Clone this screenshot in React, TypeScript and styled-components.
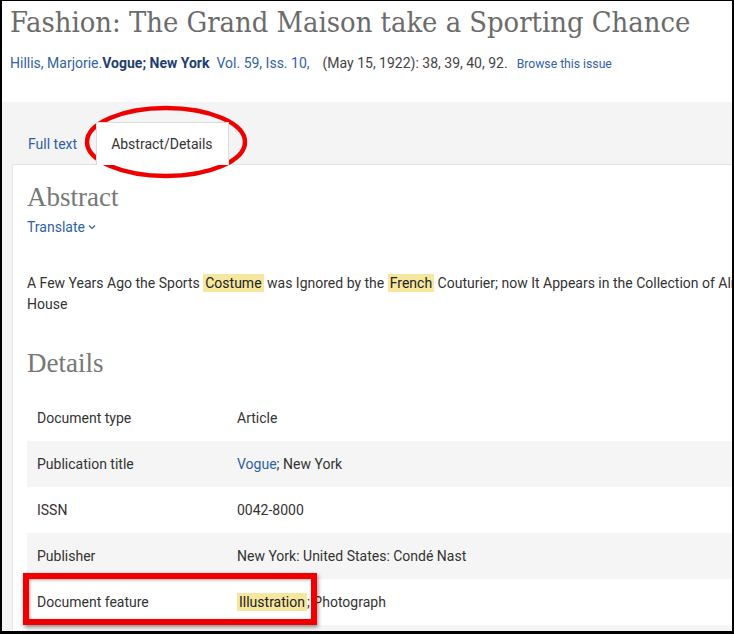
import React from "react";
import styled, { createGlobalStyle } from "styled-components";

const Global = createGlobalStyle`
  html, body { margin: 0; padding: 0; background: #000; }
  body { font-family: Roboto, "Liberation Sans", sans-serif; }
  * { box-sizing: border-box; }
`;

const Frame = styled.div`
  width: 734px;
  height: 634px;
  background: #000;
  padding: 1px 2px 3px 2px;
`;

const Screen = styled.div`
  position: relative;
  width: 100%;
  height: 100%;
  background: #fff;
  overflow: hidden;
`;

const Header = styled.header`
  padding: 3px 8px 0 8px;
  height: 101px;
`;

const Title = styled.h1`
  margin: 0;
  font-family: "DejaVu Serif", "Liberation Serif", serif;
  font-stretch: condensed;
  font-weight: 400;
  font-size: 28.8px;
  line-height: 36px;
  color: #6b6b6b;
  white-space: nowrap;
`;

const Meta = styled.div`
  margin-top: 14px;
  font-size: 14px;
  line-height: 18px;
  color: #444;
  white-space: nowrap;
`;

const MetaLink = styled.span<{ $bold?: boolean; $small?: boolean }>`
  color: ${(p) => (p.$bold ? "#1f3d73" : "#3461a8")};
  font-weight: ${(p) => (p.$bold ? 700 : 400)};
  font-size: ${(p) => (p.$small ? "12.2px" : "14px")};
`;

const Gap = styled.span<{ $w: number }>`
  display: inline-block;
  width: ${(p) => p.$w}px;
`;

const Main = styled.main`
  background: #f4f4f4;
  padding-left: 10px;
  min-height: 600px;
`;

const TabBar = styled.nav`
  display: flex;
  align-items: flex-end;
  height: 62px;
  gap: 3px;
`;

const Tab = styled.div<{ $active?: boolean }>`
  height: 43px;
  display: flex;
  align-items: center;
  padding: 0 15px 0 ${(p) => (p.$active ? 14 : 15)}px;
  font-size: 14px;
  color: ${(p) => (p.$active ? "#333" : "#2f5fa7")};
  background: ${(p) => (p.$active ? "#fff" : "transparent")};
  border: 1px solid ${(p) => (p.$active ? "#dcdcdc" : "transparent")};
  border-bottom: none;
  margin-bottom: -1px;
  position: relative;
  z-index: 1;
`;

const Panel = styled.section`
  width: 1100px;
  background: #fff;
  border-top: 1px solid #e2e2e2;
  border-left: 1px solid #e8e8e8;
  padding: 14px 0 0 14px;
`;

const Heading = styled.h2`
  margin: 0;
  font-family: "Liberation Serif", "DejaVu Serif", serif;
  font-weight: 400;
  font-size: 27px;
  line-height: 36px;
  color: #777;
`;

const Translate = styled.div`
  margin-top: 4px;
  font-size: 14px;
  color: #2f5fa7;
  display: flex;
  align-items: center;
  gap: 3px;
`;

const AbstractText = styled.p`
  margin: 38px 0 0 0;
  max-width: 840px;
  font-size: 14px;
  line-height: 21px;
  color: #333;
`;

const Mark = styled.mark`
  background: #f6e79f;
  color: #222;
  padding: 1px 0;
  margin: 0 2px;
  box-shadow: 2px 0 0 #f6e79f, -2px 0 0 #f6e79f;
`;

const DetailsHeading = styled(Heading)`
  margin-top: 30px;
`;

const Table = styled.div`
  margin-top: 14px;
  display: flex;
  flex-direction: column;
`;

const Row = styled.div<{ $shade?: boolean }>`
  display: grid;
  grid-template-columns: 200px 1fr;
  align-items: center;
  height: 46px;
  padding-left: 10px;
  background: ${(p) => (p.$shade ? "#f5f5f5" : "#fff")};
  font-size: 14px;
  color: #333;
`;

const Link = styled.span`
  color: #2f5fa7;
`;

const Ellipse = styled.svg`
  position: absolute;
  left: 80px;
  top: 102px;
  pointer-events: none;
`;

const RedBox = styled.div`
  position: absolute;
  left: 21px;
  top: 572px;
  width: 294px;
  height: 52px;
  border: 6px solid #f00000;
  box-shadow: 1px 2px 4px rgba(0, 0, 0, 0.45), inset 1px 1px 3px rgba(0, 0, 0, 0.35);
  pointer-events: none;
`;

const rows: { label: string; value: React.ReactNode }[] = [
  { label: "Document type", value: "Article" },
  {
    label: "Publication title",
    value: (
      <>
        <Link>Vogue</Link>; New York
      </>
    ),
  },
  { label: "ISSN", value: "0042-8000" },
  { label: "Publisher", value: "New York: United States: Condé Nast" },
  {
    label: "Document feature",
    value: (
      <>
        <Mark>Illustration</Mark>; Photograph
      </>
    ),
  },
  { label: "", value: "" },
];

export default function App() {
  return (
    <Frame>
      <Global />
      <Screen>
        <Header>
          <Title>Fashion: The Grand Maison take a Sporting Chance</Title>
          <Meta>
            <MetaLink>Hillis, Marjorie.</MetaLink>
            <MetaLink $bold>Vogue; New York</MetaLink>
            <Gap $w={7} />
            <MetaLink>Vol. 59, Iss. 10,</MetaLink>
            <Gap $w={13} />
            (May 15, 1922): 38, 39, 40, 92.
            <Gap $w={9} />
            <MetaLink $small>Browse this issue</MetaLink>
          </Meta>
        </Header>
        <Main>
          <TabBar>
            <Tab>Full text</Tab>
            <Tab $active>Abstract/Details</Tab>
          </TabBar>
          <Panel>
            <Heading>Abstract</Heading>
            <Translate>
              Translate
              <svg width="8" height="6" viewBox="0 0 8 6">
                <path d="M1 1.5 L4 4.5 L7 1.5" fill="none" stroke="#2f5fa7" strokeWidth="1.2" />
              </svg>
            </Translate>
            <AbstractText>
              A Few Years Ago the Sports <Mark>Costume</Mark> was Ignored by the <Mark>French</Mark>{" "}
              Couturier; now It Appears in the Collection of Almost Every Great House
            </AbstractText>
            <DetailsHeading>Details</DetailsHeading>
            <Table>
              {rows.map((r, i) => (
                <Row key={i} $shade={i % 2 === 1}>
                  <span>{r.label}</span>
                  <span>{r.value}</span>
                </Row>
              ))}
            </Table>
          </Panel>
        </Main>
        <Ellipse width="170" height="80" viewBox="0 0 170 80">
          <ellipse cx="84" cy="39" rx="79" ry="34" fill="none" stroke="#ee0000" strokeWidth="4.5" />
        </Ellipse>
        <RedBox />
      </Screen>
    </Frame>
  );
}
